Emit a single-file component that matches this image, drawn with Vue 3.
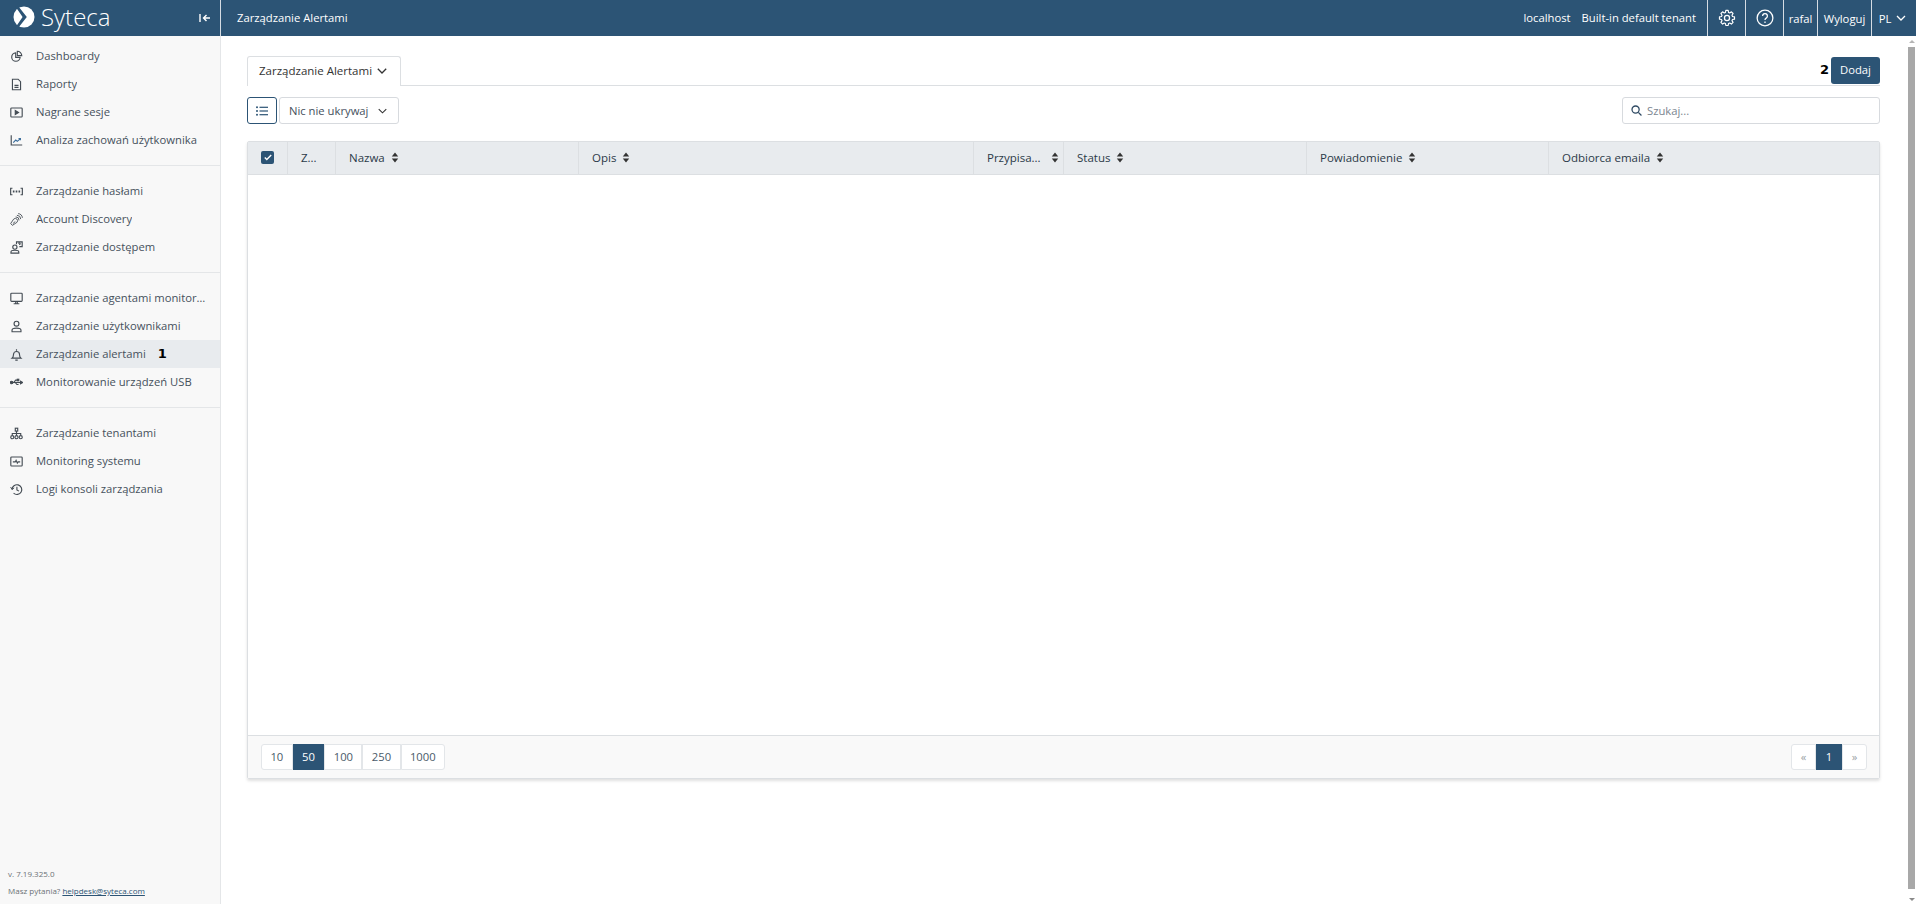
<script setup>
const groups = [
  [
    { t: 'Dashboardy', i: 'pie' },
    { t: 'Raporty', i: 'doc' },
    { t: 'Nagrane sesje', i: 'play' },
    { t: 'Analiza zachowań użytkownika', i: 'chart' }
  ],
  [
    { t: 'Zarządzanie hasłami', i: 'pass' },
    { t: 'Account Discovery', i: 'disc' },
    { t: 'Zarządzanie dostępem', i: 'access' }
  ],
  [
    { t: 'Zarządzanie agentami monitorującymi', i: 'mon' },
    { t: 'Zarządzanie użytkownikami', i: 'user' },
    { t: 'Zarządzanie alertami', i: 'bell', active: true, mark: '1' },
    { t: 'Monitorowanie urządzeń USB', i: 'usb' }
  ],
  [
    { t: 'Zarządzanie tenantami', i: 'tree' },
    { t: 'Monitoring systemu', i: 'pulse' },
    { t: 'Logi konsoli zarządzania', i: 'hist' }
  ]
]
const cols = [
  { t: 'Z...', w: 48 },
  { t: 'Nazwa', w: 243, s: true },
  { t: 'Opis', w: 395, s: true },
  { t: 'Przypisa...', w: 90, s: true, tight: true },
  { t: 'Status', w: 243, s: true },
  { t: 'Powiadomienie', w: 242, s: true },
  { t: 'Odbiorca emaila', w: 331, s: true, last: true }
]
const sizes = ['10', '50', '100', '250', '1000']
</script>

<template>
  <div class="app">
    <header class="top">
      <div class="brand">
        <svg class="logo" viewBox="0 0 22 22" width="22" height="22">
          <circle cx="11" cy="11" r="10.500" fill="#fff" />
          <path fill="#2c5475" d="M5.500 .5 13.800 11 5.500 21.500H2.400L9.600 11 2.400 .5z" />
        </svg>
        <span class="brand-name">Syteca</span>
        <svg class="collapse" viewBox="0 0 12 10" width="12" height="10">
          <path d="M1 1v8M11 5H4.500M7.500 2 4.500 5l3 3" fill="none" stroke="#fff" stroke-width="1.400" />
        </svg>
      </div>
      <div class="page-title">Zarządzanie Alertami</div>
      <div class="top-right">
        <span class="top-text">localhost</span>
        <span class="top-text tenant">Built-in default tenant</span>
        <span class="cell icon-cell">
          <svg viewBox="0 0 24 24" width="18" height="18" fill="none" stroke="#fff" stroke-width="1.700" stroke-linejoin="round">
            <path d="M10.300 2h3.400l.5 2.900 1.700.8 2.500-1.600 2.400 2.400-1.600 2.500.8 1.800 2.900.5v3.400l-2.900.5-.8 1.700 1.600 2.500-2.400 2.400-2.500-1.600-1.700.8-.5 2.900h-3.400l-.5-2.900-1.700-.8-2.500 1.600-2.400-2.400 1.600-2.500-.8-1.700-2.900-.5v-3.400l2.900-.5.8-1.800-1.600-2.500 2.400-2.400 2.500 1.600 1.700-.8z" transform="translate(12 12) scale(.92) translate(-12 -13)" />
            <circle cx="12" cy="12" r="3.400" />
          </svg>
        </span>
        <span class="cell icon-cell">
          <svg viewBox="0 0 24 24" width="18" height="18" fill="none" stroke="#fff" stroke-width="1.700">
            <circle cx="12" cy="12" r="10.500" />
            <path d="M8.800 9.300a3.200 3.200 0 1 1 4.800 2.800c-1 .6-1.600 1.200-1.600 2.400" />
            <path d="M12 16.500v2" />
          </svg>
        </span>
        <span class="cell user-cell">rafal</span>
        <span class="cell logout-cell">Wyloguj</span>
        <span class="cell lang">PL
          <svg viewBox="0 0 10 6" width="10" height="6"><path d="M1 1l4 4 4-4" fill="none" stroke="#fff" stroke-width="1.300" /></svg>
        </span>
      </div>
    </header>

    <div class="body">
      <aside class="side">
        <nav class="nav">
          <ul v-for="(g, gi) in groups" :key="gi" class="group">
            <li v-for="it in g" :key="it.t" class="item" :class="{ active: it.active }">
              <svg class="ico" viewBox="0 0 16 16" width="13" height="13" fill="none" stroke="#444c54" stroke-width="1.400">
                <template v-if="it.i === 'pie'">
                  <path d="M7 3.500a5.200 5.200 0 1 0 5.500 5.500H7z" />
                  <path d="M9 1.500a5.500 5.500 0 0 1 5.500 5.500H9z" />
                </template>
                <template v-else-if="it.i === 'doc'">
                  <path d="M3 1.500h7l3 3v10H3z" />
                  <path d="M5.500 9h5M5.500 11.500h5" />
                </template>
                <template v-else-if="it.i === 'play'">
                  <rect x="1" y="2.500" width="14" height="11" rx="1" />
                  <path d="M6.500 5.500v5l4-2.500z" fill="#444c54" />
                </template>
                <template v-else-if="it.i === 'chart'">
                  <path d="M1.500 1.500v12h13.500" />
                  <path d="M4 10.500l3-3 2 1.500 3.500-3M10.500 5.500h2.300v2.300" stroke="#3c6e9c" />
                </template>
                <template v-else-if="it.i === 'pass'">
                  <path d="M3 4H.8v8H3M13 4h2.200v8H13" />
                  <path d="M3.500 8h2M7 8h2M10.500 8h2" stroke-width="2.200" />
                </template>
                <template v-else-if="it.i === 'disc'">
                  <g stroke-width="1.100">
                    <path d="M4.500 7.500a2.400 2.400 0 0 1 4 4L3 15.200.8 13z" />
                    <path d="M3.500 13l3-2.500" />
                    <path d="M7 4.800a4.200 4.200 0 0 1 4.200 4.200M8.500 2.800a4.800 4.800 0 0 1 4.700 4.700M10 .8a5.200 5.200 0 0 1 5.200 5.200" />
                  </g>
                </template>
                <template v-else-if="it.i === 'access'">
                  <circle cx="6" cy="7.500" r="2.600" />
                  <path d="M1.200 15v-1.600c0-1.400 1.500-2 4.800-2s4.800.6 4.800 2V15z" />
                  <path d="M8 4V1h7v6h-3.500" />
                  <path d="M10.500 3.200a1 1 0 1 1 1.400 1v.8" />
                </template>
                <template v-else-if="it.i === 'mon'">
                  <rect x="1" y="1.500" width="14" height="10" rx="1" />
                  <path d="M4.500 14.500h7M7 11.500v3M9 11.500v3" />
                </template>
                <template v-else-if="it.i === 'user'">
                  <circle cx="8" cy="4.500" r="3" />
                  <path d="M2.500 14.500v-2c0-1.500 1.800-2.500 5.500-2.500s5.500 1 5.500 2.500v2z" />
                </template>
                <template v-else-if="it.i === 'bell'">
                  <path d="M2.500 12.500c1.200-1 1.800-2 1.800-4.500a3.700 3.700 0 0 1 7.400 0c0 2.500.6 3.500 1.800 4.500z" />
                  <path d="M8 1.500v2M6.500 15h3" />
                </template>
                <template v-else-if="it.i === 'usb'">
                  <path d="M1 8h13" />
                  <circle cx="2" cy="8" r="1.500" fill="#444c54" />
                  <path d="M4.500 8l2.500-3h2M6.500 8l2 2.500h2" />
                  <rect x="9" y="4" width="1.800" height="1.800" fill="#444c54" />
                  <path d="M13 6.500l2.500 1.500-2.500 1.500z" fill="#444c54" />
                </template>
                <template v-else-if="it.i === 'tree'">
                  <rect x="6.500" y="1.500" width="3" height="3.500" />
                  <path d="M8 5v5M2.800 10V8h10.400v2" />
                  <circle cx="2.800" cy="12.500" r="1.900" />
                  <circle cx="8" cy="12.500" r="1.900" />
                  <circle cx="13.200" cy="12.500" r="1.900" />
                </template>
                <template v-else-if="it.i === 'pulse'">
                  <rect x="1" y="2.500" width="14" height="11" rx="1" />
                  <path d="M3.500 8.500h3l1-2 1.500 3.500 1-1.500h2.500" />
                </template>
                <template v-else>
                  <path d="M2.500 8a6 6 0 1 1 1.900 4.500" />
                  <path d="M.8 5l1.700 3 2.600-2" stroke-width="1.200" />
                  <path d="M8.500 4.500v4l2.500 1.500" />
                </template>
              </svg>
              <span class="label">{{ it.t }}</span>
              <b v-if="it.mark" class="mark">{{ it.mark }}</b>
            </li>
          </ul>
        </nav>
        <div class="side-foot">
          <div>v. 7.19.325.0</div>
          <div class="q">Masz pytania? <a href="#" class="mail">helpdesk@syteca.com</a></div>
        </div>
      </aside>

      <main class="main">
        <div class="tabs">
          <div class="tab">Zarządzanie Alertami
            <svg viewBox="0 0 10 6" width="10" height="6"><path d="M.8 .8 5 5l4.200-4.200" fill="none" stroke="#333" stroke-width="1.300" /></svg>
          </div>
          <div class="tab-actions">
            <b class="mark two">2</b>
            <button class="add">Dodaj</button>
          </div>
        </div>

        <div class="toolbar">
          <button class="list-btn">
            <svg viewBox="0 0 12 10" width="12" height="10" fill="#2c5475">
              <circle cx="1" cy="1.300" r="1" /><circle cx="1" cy="5" r="1" /><circle cx="1" cy="8.700" r="1" />
              <rect x="3.500" y=".7" width="8.500" height="1.200" /><rect x="3.500" y="4.400" width="8.500" height="1.200" /><rect x="3.500" y="8.100" width="8.500" height="1.200" />
            </svg>
          </button>
          <div class="select">
            <span>Nic nie ukrywaj</span>
            <svg viewBox="0 0 10 6" width="9" height="6"><path d="M.8 .8 5 5l4.200-4.200" fill="none" stroke="#333" stroke-width="1.200" /></svg>
          </div>
          <div class="search">
            <svg viewBox="0 0 12 12" width="11" height="11" fill="none" stroke="#2f4a63" stroke-width="1.400">
              <circle cx="5" cy="5" r="3.900" /><path d="M8 8l3.400 3.400" />
            </svg>
            <span>Szukaj...</span>
          </div>
        </div>

        <section class="grid-card">
          <div class="thead">
            <div class="th check-th"><span class="check"><svg viewBox="0 0 10 8" width="8" height="7"><path d="M1 4l2.500 2.500L9 1" fill="none" stroke="#fff" stroke-width="1.800" /></svg></span></div>
            <div v-for="c in cols" :key="c.t" class="th" :class="{ tight: c.tight, last: c.last }" :style="{ width: c.w + 'px' }">
              <span>{{ c.t }}</span>
              <svg v-if="c.s" class="sort" viewBox="0 0 8 12" width="8" height="11" fill="#333">
                <path d="M4 .5 7.500 5h-7zM4 11.500 .5 7h7z" />
              </svg>
            </div>
          </div>
          <div class="tbody"></div>
          <div class="tfoot">
            <div class="pages">
              <span v-for="s in sizes" :key="s" class="pg" :class="{ on: s === '50' }">{{ s }}</span>
            </div>
            <div class="pager">
              <span class="pg-n muted">«</span>
              <span class="pg-n on">1</span>
              <span class="pg-n muted">»</span>
            </div>
          </div>
        </section>
      </main>

      <div class="scrollbar">
        <span class="arrow"></span>
        <span class="thumb"></span>
        <span class="arrow down"></span>
      </div>
    </div>
  </div>
</template>

<style>
html, body { margin: 0; overflow: hidden; }
</style>

<style scoped>
.app {
  width: 1916px;
  height: 904px;
  display: flex;
  flex-direction: column;
  font-family: "Open Sans", sans-serif;
  font-size: 11.25px;
  color: #333;
  background: #fff;
  overflow: hidden;
}
.top {
  height: 36px;
  flex: none;
  display: flex;
  align-items: stretch;
  background: #2c5475;
  color: #fff;
}
.brand {
  width: 221px;
  flex: none;
  display: flex;
  align-items: center;
  padding-left: 13px;
  padding-right: 9px;
  box-sizing: border-box;
  border-right: 1px solid #d5dce3;
}
.logo { flex: none; margin-top: -2px; }
.brand-name {
  font-weight: 300;
  font-size: 24px;
  line-height: 34px;
  padding-bottom: 2px;
  margin-left: 6px;
  flex: 1;
}
.collapse { flex: none; }
.page-title { padding-left: 16px; line-height: 35px; }
.top-right { margin-left: auto; display: flex; align-items: stretch; line-height: 35px; }
.top-text { margin-right: 11px; }
.cell {
  border-left: 1px solid #d5dce3;
  display: flex;
  align-items: center;
  justify-content: center;
  box-sizing: border-box;
}
.icon-cell { width: 38px; }
.user-cell { width: 34px; }
.logout-cell { width: 54px; }
.lang { width: 45px; gap: 5px; padding-right: 3px; }

.body { flex: 1; min-height: 0; display: flex; }

.side {
  width: 221px;
  flex: none;
  box-sizing: border-box;
  background: #f8f8f8;
  border-right: 1px solid #e4e6e8;
  display: flex;
  flex-direction: column;
}
.nav { flex: 1; padding-top: 6px; }
.group {
  list-style: none;
  margin: 0 0 11px;
  padding: 0 0 11px;
  border-bottom: 1px solid #e4e6e8;
}
.group:last-child { border-bottom: 0; }
.item {
  height: 28px;
  display: flex;
  align-items: center;
  padding-left: 10px;
  color: #46515c;
}
.item.active { background: #e8ebee; }
.ico { flex: none; margin-right: 13px; }
.label { white-space: nowrap; overflow: hidden; text-overflow: ellipsis; max-width: 170px; padding-bottom: 2px; }
.mark { font-family: "DejaVu Sans", sans-serif; font-weight: 700; font-size: 13px; color: #000; margin-left: 12px; margin-top: -2px; }
.side-foot {
  padding: 0 0 5px 8px;
  font-size: 8px;
  line-height: 17px;
  color: #6b7176;
}
.mail { color: #2c5475; text-decoration: underline; }

.main {
  flex: 1;
  min-width: 0;
  box-sizing: border-box;
  padding: 20px 28px 0 26px;
}
.tabs {
  height: 29px;
  display: flex;
  justify-content: space-between;
  border-bottom: 1px solid #dcdfe2;
}
.tab {
  height: 30px;
  box-sizing: border-box;
  padding: 0 11px 2px;
  display: flex;
  align-items: center;
  gap: 5px;
  background: #fff;
  border: 1px solid #dcdfe2;
  border-bottom: 0;
  border-radius: 3px 3px 0 0;
  width: 154px;
  white-space: nowrap;
  font-size: 11.5px;
}
.tab-actions { display: flex; align-items: flex-start; padding-top: 1px; }
.two { margin: 5px 2px 0 0; }
.add {
  width: 49px;
  height: 27px;
  border: 0;
  border-radius: 3px;
  padding: 0 0 2px;
  background: #2c5475;
  color: #fff;
  font: 11.25px "Open Sans", sans-serif;
}
.toolbar { display: flex; align-items: center; height: 27px; margin-top: 11px; gap: 2px; }
.list-btn {
  width: 30px;
  height: 27px;
  padding: 0;
  background: #fff;
  border: 1px solid #2c5475;
  border-radius: 3px;
  display: flex;
  align-items: center;
  justify-content: center;
}
.select {
  width: 120px;
  height: 27px;
  box-sizing: border-box;
  display: flex;
  align-items: center;
  justify-content: space-between;
  padding: 0 11px 0 9px;
  border: 1px solid #d7dade;
  border-radius: 3px;
  color: #44505c;
}
.search {
  margin-left: auto;
  width: 258px;
  height: 27px;
  box-sizing: border-box;
  display: flex;
  align-items: center;
  gap: 5px;
  padding-left: 8px;
  border: 1px solid #d7dade;
  border-radius: 3px;
  color: #7b8590;
}
.grid-card {
  margin-top: 17px;
  height: 638px;
  box-sizing: border-box;
  border: 1px solid #dcdfe2;
  border-radius: 2px;
  box-shadow: 0 2px 3px rgba(0, 0, 0, .12);
  display: flex;
  flex-direction: column;
}
.thead {
  height: 33px;
  flex: none;
  box-sizing: border-box;
  display: flex;
  background: #e8ebee;
  border-bottom: 1px solid #dcdfe2;
}
.th {
  box-sizing: border-box;
  display: flex;
  align-items: center;
  gap: 6px;
  padding-left: 13px;
  padding-bottom: 2px;
  border-right: 1px solid #dcdfe2;
  color: #2b3a48;
  white-space: nowrap;
  font-size: 11.5px;
}
.th.tight { justify-content: space-between; padding-right: 4px; }
.th.last { border-right: 0; flex: 1; }
.check-th { width: 40px; flex: none; }
.check {
  width: 13px;
  height: 13px;
  background: #2c5475;
  border-radius: 2px;
  display: flex;
  align-items: center;
  justify-content: center;
}
.tbody { flex: 1; }
.tfoot {
  height: 43px;
  flex: none;
  box-sizing: border-box;
  background: #f9f9f9;
  border-top: 1px solid #dcdfe2;
  display: flex;
  align-items: flex-start;
  justify-content: space-between;
  padding: 8px 12px 0 13px;
}
.pages { display: flex; }
.pg {
  height: 26px;
  box-sizing: border-box;
  padding: 0 8.4px 2px;
  display: flex;
  align-items: center;
  background: #fff;
  border: 1px solid #e3e6e9;
  color: #4a5a69;
}
.pg:first-child { border-radius: 3px 0 0 3px; }
.pg:last-child { border-radius: 0 3px 3px 0; }
.pg.on { background: #2c5475; color: #fff; border-color: #2c5475; }
.pager { display: flex; }
.pg-n {
  width: 25px;
  height: 26px;
  box-sizing: border-box;
  padding-bottom: 2px;
  display: flex;
  align-items: center;
  justify-content: center;
  background: #fff;
  border: 1px solid #e3e6e9;
}
.pg-n:first-child { border-radius: 3px 0 0 3px; }
.pg-n:last-child { border-radius: 0 3px 3px 0; }
.pg-n.on { width: 26px; background: #2c5475; color: #fff; border-color: #2c5475; }
.pg-n.muted { color: #9a9fa5; }
.scrollbar {
  width: 8px;
  flex: none;
  background: #fff;
  display: flex;
  flex-direction: column;
  align-items: center;
}
.arrow {
  flex: none;
  width: 0;
  height: 0;
  margin: 4px 0 4px;
  border-left: 3px solid transparent;
  border-right: 3px solid transparent;
  border-bottom: 3px solid #b5b5b5;
}
.arrow.down {
  margin: 9px 0 3px;
  border-bottom: 0;
  border-top: 3px solid #8a8a8a;
}
.thumb { width: 7px; margin-right: 1px; flex: 1; background: #a8a8a8; }
</style>
